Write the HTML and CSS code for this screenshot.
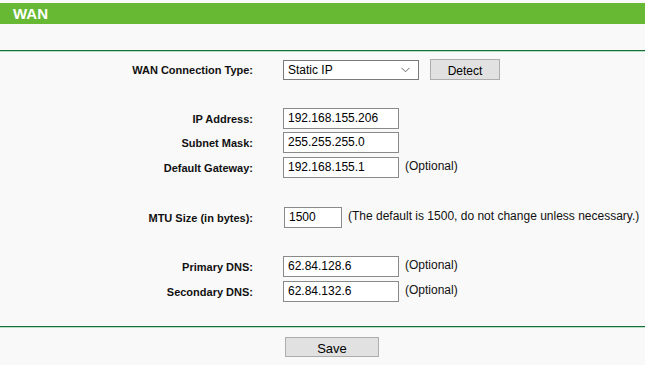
FILE: index.html
```html
<!DOCTYPE html>
<html>
<head>
<meta charset="utf-8">
<link rel="stylesheet" href="styles.css">
</head>
<body>
<div class="page">
  <div class="title-bar"><span class="title">WAN</span></div>
  <div class="sep"></div>
  <div class="form">
    <div class="row r-type">
      <label class="lbl">WAN Connection Type:</label>
      <div class="ctl">
        <div class="select"><span>Static IP</span>
          <svg class="chev" width="9" height="6" viewBox="0 0 9 6"><path d="M0.5 0.8 L4.5 4.8 L8.5 0.8" fill="none" stroke="#666" stroke-width="1"/></svg>
        </div>
        <button class="btn detect">Detect</button>
      </div>
    </div>
    <div class="row r-ip">
      <label class="lbl">IP Address:</label>
      <div class="ctl"><div class="inp">192.168.155.206</div></div>
    </div>
    <div class="row">
      <label class="lbl">Subnet Mask:</label>
      <div class="ctl"><div class="inp">255.255.255.0</div></div>
    </div>
    <div class="row">
      <label class="lbl">Default Gateway:</label>
      <div class="ctl"><div class="inp">192.168.155.1</div><span class="hint">(Optional)</span></div>
    </div>
    <div class="row r-mtu">
      <label class="lbl">MTU Size (in bytes):</label>
      <div class="ctl"><div class="inp mtu">1500</div><span class="hint">(The default is 1500, do not change unless necessary.)</span></div>
    </div>
    <div class="row r-dns">
      <label class="lbl">Primary DNS:</label>
      <div class="ctl"><div class="inp">62.84.128.6</div><span class="hint">(Optional)</span></div>
    </div>
    <div class="row">
      <label class="lbl">Secondary DNS:</label>
      <div class="ctl"><div class="inp">62.84.132.6</div><span class="hint">(Optional)</span></div>
    </div>
  </div>
  <div class="sep bottom"></div>
  <div class="actions">
    <button class="btn save">Save</button>
  </div>
</div>
</body>
</html>
```

FILE: styles.css
```css
html, body {
  margin: 0;
  padding: 0;
  background: #f9f9f9;
}
body {
  font-family: "Liberation Sans", Arial, sans-serif;
  font-size: 12px;
  color: #000;
}
.page {
  width: 645px;
  height: 365px;
  overflow: hidden;
  background: #f9f9f9;
}
.title-bar {
  margin-top: 3px;
  height: 21px;
  background: #67b934;
  display: flex;
  align-items: center;
  padding-left: 13px;
}
.title {
  color: #fff;
  font-weight: bold;
  font-size: 15px;
  line-height: 21px;
}
.sep {
  margin-top: 26px;
  height: 1px;
  background: #17703a;
  border-bottom: 1px solid #b6dfc3;
}
.sep.bottom {
  margin-top: 22px;
}
.form {
  display: flex;
  flex-direction: column;
}
.row {
  display: flex;
  align-items: center;
  box-sizing: border-box;
  height: 25px;
  padding: 2px 0;
}
.r-type {
  margin-top: 5px;
  height: 24px;
  padding: 2px 0 1px;
}
.r-ip {
  margin-top: 25px;
  height: 24px;
  padding: 2px 0 1px;
}
.r-mtu {
  margin-top: 25px;
}
.r-dns {
  margin-top: 24px;
}
.lbl {
  width: 253px;
  text-align: right;
  font-weight: bold;
  font-size: 11px;
  color: #111;
  flex: none;
}
.ctl {
  display: flex;
  align-items: center;
  margin-left: 30px;
}
.select {
  height: 18px;
  border: 1px solid #7a7a7a;
  background: #fff;
  display: flex;
  align-items: center;
  justify-content: space-between;
  padding: 0 8px 0 4px;
  box-sizing: content-box;
  width: 122px;
  font-size: 12px;
}
.chev {
  display: block;
}
.btn {
  font-family: "Liberation Sans", Arial, sans-serif;
  background: #e1e1e1;
  border: 1px solid #adadad;
  color: #000;
  padding: 0;
  margin: 0;
}
.detect {
  margin-left: 11px;
  width: 70px;
  height: 21px;
  font-size: 12px;
  padding-top: 2px;
}
.inp {
  width: 110px;
  height: 19px;
  border: 1px solid #8a8a8a;
  background: #fff;
  padding-left: 4px;
  font-size: 12px;
  line-height: 21px;
  box-sizing: content-box;
  display: flex;
  align-items: center;
}
.inp.mtu {
  width: 52px;
  margin-left: 1px;
}
.hint {
  margin-left: 6px;
  font-size: 12px;
  color: #111;
  position: relative;
  top: -2px;
}
.actions {
  display: flex;
  padding-left: 285px;
  margin-top: 9px;
}
.save {
  width: 94px;
  height: 20px;
  font-size: 13px;
  line-height: 18px;
  padding-top: 2px;
}
```
